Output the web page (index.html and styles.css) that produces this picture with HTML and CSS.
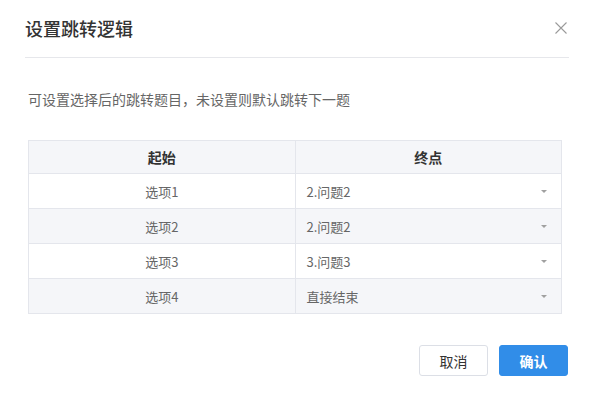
FILE: index.html
```html
<!DOCTYPE html>
<html lang="zh">
<head>
<meta charset="utf-8">
<link rel="stylesheet" href="styles.css">
</head>
<body>
<div class="dialog">
  <div class="header">
    <div class="title">设置跳转逻辑</div>
    <svg class="close" width="12" height="12" viewBox="0 0 12 12"><path d="M0.5 0.5L11.5 11.5M11.5 0.5L0.5 11.5" stroke="#9a9a9a" stroke-width="1.1" fill="none"/></svg>
  </div>
  <div class="desc">可设置选择后的跳转题目，未设置则默认跳转下一题</div>
  <table class="logic">
    <thead>
      <tr><th>起始</th><th>终点</th></tr>
    </thead>
    <tbody>
      <tr><td class="src">选项1</td><td class="dst"><span>2.问题2</span><i class="caret"></i></td></tr>
      <tr class="alt"><td class="src">选项2</td><td class="dst"><span>2.问题2</span><i class="caret"></i></td></tr>
      <tr><td class="src">选项3</td><td class="dst"><span>3.问题3</span><i class="caret"></i></td></tr>
      <tr class="alt"><td class="src">选项4</td><td class="dst"><span>直接结束</span><i class="caret"></i></td></tr>
    </tbody>
  </table>
  <div class="footer">
    <button class="btn cancel">取消</button>
    <button class="btn ok">确认</button>
  </div>
</div>
</body>
</html>
```
FILE: styles.css
```css
html, body {
  margin: 0;
  padding: 0;
  background: #fff;
  font-family: "Noto Sans CJK SC", "Liberation Sans", sans-serif;
}
.dialog {
  width: 596px;
  height: 400px;
  box-sizing: border-box;
}
.header {
  margin: 0 27px 0 25px;
  height: 58px;
  border-bottom: 1px solid #e6e7eb;
  display: flex;
  align-items: center;
  justify-content: space-between;
  box-sizing: border-box;
  padding-bottom: 1px;
}
.title {
  font-size: 18px;
  color: #333;
  line-height: 24px;
  font-weight: 500;
}
.close {
  margin-right: 2px;
  margin-top: -1px;
}
.desc {
  margin: 30px 0 0 28px;
  font-size: 14px;
  color: #666;
  line-height: 22px;
}
.logic {
  margin: 30px 0 0 28px;
  width: 534px;
  border-collapse: collapse;
  font-size: 13px;
  table-layout: fixed;
}
.logic th, .logic td {
  border: 1px solid #e4e6ec;
  padding: 0;
}
.logic th {
  background: #f5f6f9;
  height: 32px;
  font-weight: bold;
  color: #333;
  font-size: 14px;
  width: 50%;
}
.logic td {
  height: 34px;
  color: #666;
}
.logic tr.alt td {
  background: #f5f6f9;
}
.src {
  text-align: center;
}
.dst {
  padding: 0 14px 0 11px !important;
  position: relative;
}
.caret {
  position: absolute;
  right: 14px;
  top: 50%;
  margin-top: -1px;
  width: 0;
  height: 0;
  border-left: 3px solid transparent;
  border-right: 3px solid transparent;
  border-top: 3px solid #a0a0a0;
}
.footer {
  margin: 31px 28px 0 0;
  display: flex;
  justify-content: flex-end;
  gap: 11px;
}
.btn {
  width: 69px;
  height: 31px;
  border-radius: 3px;
  font-size: 14px;
  font-family: "Noto Sans CJK SC", "Liberation Sans", sans-serif;
  padding: 0;
  cursor: pointer;
}
.cancel {
  background: #fff;
  border: 1px solid #dcdfe6;
  color: #333;
}
.ok {
  background: #318de8;
  border: 1px solid #318de8;
  color: #fff;
  font-weight: bold;
}
```
